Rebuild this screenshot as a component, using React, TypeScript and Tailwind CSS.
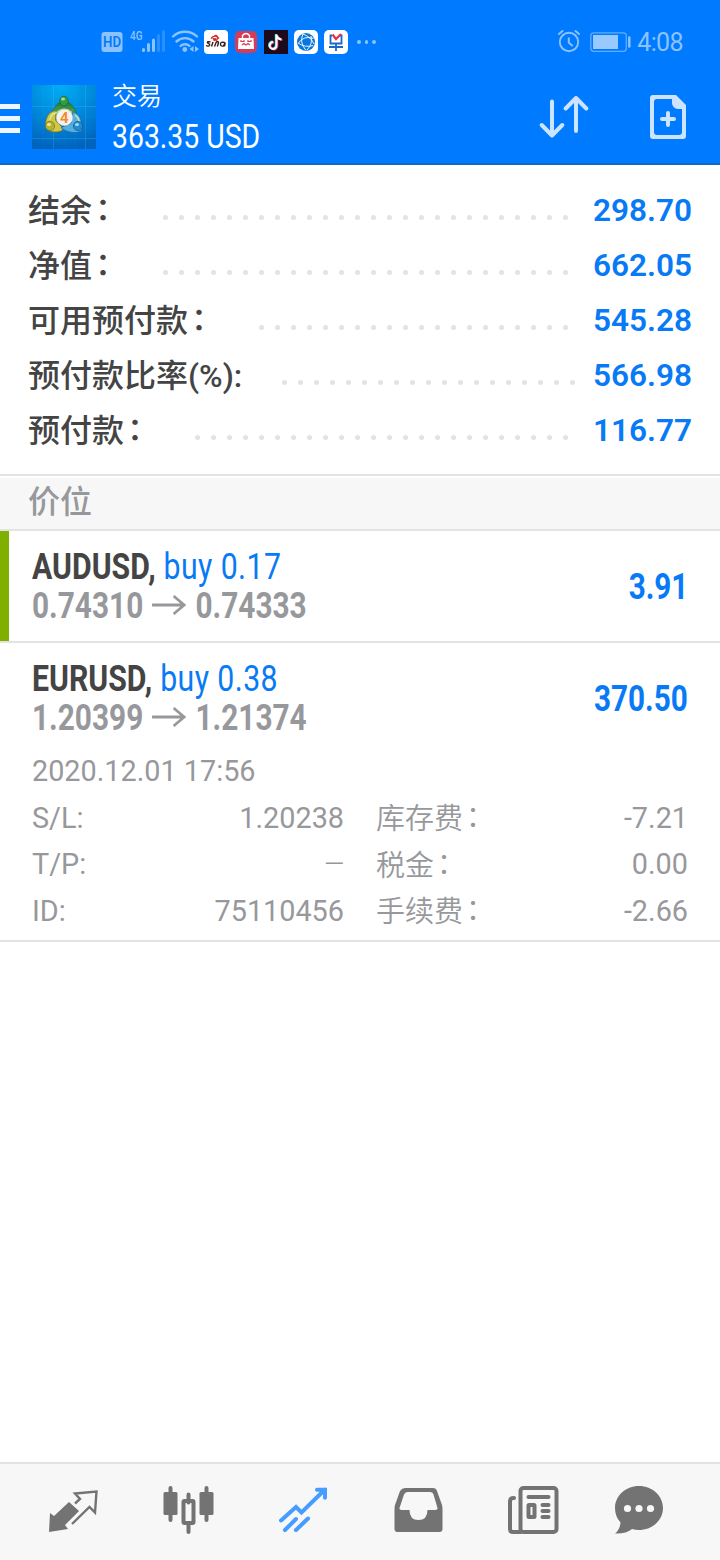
import React from 'react';

interface BalanceItem {
  label: string;
  value: string;
  dots: number;
  dotsEnd: string;
}

interface DetailItem {
  label: string;
  value: string;
}

const balance: BalanceItem[] = [
  { label: '结余：', value: '298.70', dots: 26, dotsEnd: 'mr-[25px]' },
  { label: '净值：', value: '662.05', dots: 26, dotsEnd: 'mr-[25px]' },
  { label: '可用预付款：', value: '545.28', dots: 20, dotsEnd: 'mr-[25px]' },
  { label: '预付款比率(%):', value: '566.98', dots: 19, dotsEnd: 'mr-[18px]' },
  { label: '预付款：', value: '116.77', dots: 24, dotsEnd: 'mr-[25px]' },
];

const leftDetails: DetailItem[] = [
  { label: 'S/L:', value: '1.20238' },
  { label: 'T/P:', value: '—' },
  { label: 'ID:', value: '75110456' },
];

const rightDetails: DetailItem[] = [
  { label: '库存费：', value: '-7.21' },
  { label: '税金：', value: '0.00' },
  { label: '手续费：', value: '-2.66' },
];

// The full-width colon sits nearer the middle of its cell than the font puts it
const Label: React.FC<{ text: string }> = ({ text }) =>
  text.endsWith('：') ? (
    <span>
      {text.slice(0, -1)}
      <span className="inline-block -translate-y-[0.06em] translate-x-[0.09em]">：</span>
    </span>
  ) : (
    <span>{text}</span>
  );

const StatusBar: React.FC = () => (
  <div className="flex h-[84px] items-start text-[#8cc3ff]">
    <svg className="ml-[100px] mt-[28px] h-7 w-[100px]" viewBox="100 28 100 28" fill="none">
      <rect x="101.5" y="32" width="21" height="20" rx="3" fill="currentColor" />
      <text x="103" y="47" fontSize="14" fontWeight="600" fill="#007aff" textLength="18" lengthAdjust="spacingAndGlyphs" className="font-[Roboto]">HD</text>
      <text x="130" y="40" fontSize="13" fontWeight="500" fill="currentColor" textLength="12.5" lengthAdjust="spacingAndGlyphs" className="font-[Roboto]">4G</text>
      <g strokeWidth="3" strokeLinecap="round" stroke="currentColor">
        <path d="M143.5 49.5v1M148.5 44.5v6M153.5 40v10.5" />
        <path d="M158.5 35.500v15M163.500 31.500v19" opacity=".3" />
      </g>
      <g stroke="currentColor" strokeWidth="2.400" strokeLinecap="round">
        <path d="M173 36.500a17.500 17.500 0 0 1 24 0M176.500 41.500a12.500 12.500 0 0 1 17 0M180.500 46a6.500 6.500 0 0 1 9 0" />
      </g>
      <circle cx="184.800" cy="49.500" r="2.400" fill="currentColor" />
      <path d="M193.500 46v6l-4-3zM195 46v6l4-3z" fill="currentColor" />
    </svg>
    <div className="ml-1 mt-[30px] flex gap-1.5">
      <svg className="size-6" viewBox="0 0 24 24">
        <rect width="24" height="24" rx="4" fill="#fff" />
        <path d="M7 8.500q4-5 8 0M10 6.500q3-3 4 2M9 8l1.500 3M13.500 8l-1 3" stroke="#d92b2b" strokeWidth="1.300" fill="none" />
        <path d="M6.500 12q-3.500-.8-3 .8 3.500 1.700 1.500 3-1.500.8-3-.3M9 12l-1.500 4.500M10.500 16.500l1.800-4.500q3-1 2 1.500l-1 3M20.500 12.500q-3.800-1-4 1.500t3 2l1.700-3.500-.7 4" stroke="#33201d" strokeWidth="1.400" fill="none" />
        <circle cx="11" cy="9.500" r="1.400" fill="#d92b2b" />
      </svg>
      <svg className="size-6" viewBox="0 0 24 24">
        <rect x="1" y="1" width="22" height="22" rx="5" fill="#d83b58" />
        <path d="M8.500 8V5.500q3.500-4 7 0V8" stroke="#fff" strokeWidth="1.300" fill="none" />
        <path d="M4.500 8h15l.5 11h-16z" fill="#fff" />
        <path d="M7 10v1.500h3V10M14 10v1.500h3V10M8 15l2-1.500 2 1.500 2-1.500 2 1.500" stroke="#d83b58" strokeWidth="1.200" fill="none" />
      </svg>
      <svg className="size-6" viewBox="0 0 24 24">
        <rect width="24" height="24" fill="#1c0b1c" />
        <g fill="none" strokeWidth="2">
          <path d="M12.500 4.500v11a3.400 3.400 0 1 1-3.200-3.400M12.500 5q1 4 5 4.500" stroke="#37dbe0" transform="translate(-.7 -.5)" />
          <path d="M12.500 4.500v11a3.400 3.400 0 1 1-3.200-3.400M12.500 5q1 4 5 4.500" stroke="#ee3158" transform="translate(.8 .6)" />
          <path d="M12.500 4.500v11a3.400 3.400 0 1 1-3.200-3.400M12.500 5q1 4 5 4.500" stroke="#fff" />
        </g>
      </svg>
      <svg className="size-6" viewBox="0 0 24 24">
        <rect width="24" height="24" rx="5" fill="#fff" />
        <circle cx="12" cy="12" r="9" fill="#0878df" />
        <path d="M9 4Q17 7 20 14M4.500 13Q10 5 19.500 8.500M9 4Q5 12 12 20.500M4 13q7 5 15 2.500M17 6q2 8-4 14" stroke="#fff" strokeWidth=".9" fill="none" />
      </svg>
      <svg className="size-6" viewBox="0 0 24 24">
        <rect width="24" height="24" rx="5" fill="#fff" />
        <path d="M8 5.500H6.500v8h11v-8H16M5 17h14M12 13v8" stroke="#1a68c4" strokeWidth="1.800" fill="none" />
        <path d="M8.500 4.500L12 9l5-5" stroke="#e5304c" strokeWidth="2.200" fill="none" />
      </svg>
    </div>
    <div className="ml-[9px] mt-[39px] flex gap-1 pt-px">
      <span className="size-[3.500px] rounded-full bg-current" />
      <span className="size-[3.500px] rounded-full bg-current" />
      <span className="size-[3.500px] rounded-full bg-current" />
    </div>
    <svg className="ml-auto mt-[28px] h-7 w-[76px]" viewBox="556 28 76 28" fill="none" stroke="currentColor">
      <circle cx="569" cy="42" r="9.200" strokeWidth="1.900" />
      <path d="M568.800 37.500v5l3.800 3.500" strokeWidth="2" />
      <path d="M559 34l3.500-3M579 34l-3.500-3" strokeWidth="2" strokeLinecap="round" />
      <rect x="590.800" y="32.800" width="35.500" height="18.500" rx="3" strokeWidth="1.300" opacity=".7" />
      <rect x="593" y="35" width="25" height="14" fill="#99caff" stroke="none" />
      <path d="M629.300 37.500v9" strokeWidth="2.500" strokeLinecap="round" />
    </svg>
    <span className="ml-[5px] mr-[37px] mt-[25px] font-[Roboto] text-[25px] leading-9 tracking-[-0.6px]">4:08</span>
  </div>
);

const AppLogo: React.FC = () => (
  <svg className="ml-3 size-16" viewBox="0 0 64 64">
    <defs>
      <radialGradient id="logo-bg" cx=".45" cy="0" r="1">
        <stop offset="0" stopColor="#00aef5" />
        <stop offset=".5" stopColor="#008bdd" />
        <stop offset="1" stopColor="#0064be" />
      </radialGradient>
      <linearGradient id="logo-green" x2="0" y2="1">
        <stop offset="0" stopColor="#237d34" />
        <stop offset="1" stopColor="#76bd6a" />
      </linearGradient>
    </defs>
    <rect width="64" height="64" fill="url(#logo-bg)" />
    <path d="M0 21.500h64M0 53.500h64M21.500 0v64M53.500 0v64" stroke="#5bc1f3" strokeWidth=".7" opacity=".35" />
    <path d="M0 11h64M0 32h64M0 43h64M11 0v64M32 0v64M43 0v64" stroke="#5bc1f3" strokeWidth=".5" opacity=".12" />
    <path d="M27 18c-6 4-7 11-6 17l9-6h6l8 5c1-7-1-12-7-16z" fill="url(#logo-green)" stroke="#1d6d42" strokeWidth=".8" />
    <path d="M24 25.500c-8 1-10.500 8-10.500 15.500l4 5c6 2 12 1 14-2l-8-9z" fill="#d1c646" stroke="#76762b" strokeWidth=".8" />
    <path d="M41 26.500c7 3 9 8 8 13l1 6c-6 4-16 2-21-3l10-4z" fill="#55aee2" stroke="#17679f" strokeWidth=".8" />
    <path d="M24 28q8-7 16-.500" stroke="#a8d795" strokeWidth="1.500" fill="none" />
    <path d="M17.500 35q2-7 7-7M43 30q5 4 4 9" stroke="#d6eba3" strokeWidth="1.300" fill="none" />
    <ellipse cx="32" cy="16" rx="4.200" ry="4.800" fill="#339b40" stroke="#17672f" strokeWidth=".7" />
    <ellipse cx="31" cy="14" rx="2" ry="1.500" fill="#a6da94" />
    <circle cx="18" cy="41" r="4.600" fill="#b8b22c" stroke="#6c722a" strokeWidth=".7" />
    <ellipse cx="17" cy="39.500" rx="2" ry="1.500" fill="#eee79d" />
    <circle cx="46" cy="41" r="4.600" fill="#248bd0" stroke="#11588f" strokeWidth=".7" />
    <ellipse cx="45" cy="39.500" rx="2" ry="1.500" fill="#a5daf5" />
    <circle cx="32.500" cy="32.500" r="8.200" fill="#f5f2ed" stroke="#c9cfbb" strokeWidth=".6" />
    <text x="32.300" y="38" textAnchor="middle" fontSize="15" fontWeight="600" fill="#f28a2d" className="font-[Roboto]">4</text>
  </svg>
);

const Header: React.FC = () => (
  <header className="h-[165px] border-b-2 border-[#1068cb] bg-[#007aff]">
    <StatusBar />
    <div className="flex h-[79px] items-start pt-px">
      <div className="mt-[19px] flex w-5 flex-col gap-[7px]">
        <span className="h-[5px] bg-[#eef7ff]" />
        <span className="h-[5px] bg-[#eef7ff]" />
        <span className="h-[5px] bg-[#eef7ff]" />
      </div>
      <AppLogo />
      <div className="-mt-[5px] ml-4 flex flex-col text-white">
        <span className="font-['Noto_Sans_CJK_SC',sans-serif] text-[25px] font-[350] leading-7">交易</span>
        <span className="mt-2 origin-left scale-x-[0.835] font-[Roboto] text-[34px] leading-10">363.35 USD</span>
      </div>
      <svg className="ml-auto mt-2.5 h-11 w-[50px]" viewBox="539 95 50 44" fill="none" stroke="#cce4ff" strokeWidth="4" strokeLinecap="round" strokeLinejoin="round">
        <path d="M552 101.500v34M541.700 125l10.300 10.500 10.300-10.500M576 131V98M565.700 108.500L576 98l10.300 10.500" />
      </svg>
      <svg className="ml-[61px] mr-[34px] mt-2.5 h-11 w-9" viewBox="650 95 36 44">
        <path fillRule="evenodd" d="M653 95h23l10 10v31a3 3 0 0 1-3 3h-30a3 3 0 0 1-3-3V98a3 3 0 0 1 3-3zm4 4a3 3 0 0 0-3 3v30a3 3 0 0 0 3 3h22a3 3 0 0 0 3-3v-23h-4a6 6 0 0 1-6-6v-4z" fill="#cce4ff" />
        <path d="M668 113v12M662 119h12" stroke="#cce4ff" strokeWidth="4" strokeLinecap="round" />
      </svg>
    </div>
  </header>
);

const BalanceRow: React.FC<{ item: BalanceItem }> = ({ item }) => (
  <div className="flex h-[55px] items-center">
    <div className="whitespace-nowrap pt-[2px] font-[Roboto,'Noto_Sans_CJK_SC',sans-serif] text-[32px] font-medium leading-[52px] text-[#444]">
      <Label text={item.label} />
    </div>
    <div className={`ml-auto mt-[15px] flex gap-[11px] ${item.dotsEnd}`}>
      {Array.from({ length: item.dots }, (_, i) => (
        <span key={i} className="size-[5px] rounded-full bg-[#e3e3e3]" />
      ))}
    </div>
    <div className="w-[100px] font-[Roboto] text-[32px] font-semibold text-[#087af5]">
      <span className="inline-block origin-left scale-x-[0.985]">{item.value}</span>
    </div>
  </div>
);

interface PositionProps {
  symbol: string;
  volume: string;
  open: string;
  current: string;
  profit: string;
}

const PositionHead: React.FC<PositionProps> = ({ symbol, volume, open, current, profit }) => (
  <div className="flex h-[110px] items-center justify-between pt-px font-[Roboto] text-[36px]">
    <div className="w-[280px] whitespace-nowrap leading-[39px]">
      <div className="w-max origin-left scale-x-[0.84]">
        <span className="font-bold text-[#444]">{symbol},</span>
        <span className="tracking-[0.5px] text-[#087af5]"> {volume}</span>
      </div>
      <div className="flex w-max origin-left scale-x-[0.828] items-center font-bold text-[#97989c]">
        {open}
        <svg className="mx-[11px] mb-0.5 h-5 w-[41px]" viewBox="0 0 41 20" preserveAspectRatio="none" fill="none" stroke="currentColor" strokeWidth="2.800">
          <path d="M0 10h39M26 1l13 9-13 9" />
        </svg>
        {current}
      </div>
    </div>
    <span className="origin-right scale-x-[0.825] font-bold text-[#087af5]">{profit}</span>
  </div>
);

const DetailColumn: React.FC<{ items: DetailItem[] }> = ({ items }) => (
  <div className="flex w-[312px] flex-col">
    {items.map((item) => (
      <div key={item.label} className="flex h-[46.500px] items-center justify-between">
        <div className={item.label.endsWith('：') ? 'pt-[3px] text-[29px] font-[350]' : ''}>
          <Label text={item.label} />
        </div>
        <span className={item.value === '—' ? 'origin-right scale-x-90 font-[350]' : ''}>{item.value}</span>
      </div>
    ))}
  </div>
);

const TabBar: React.FC = () => (
  <nav className="flex h-[98px] items-start gap-[63px] border-t-2 border-[#e2e2e2] bg-[#f7f7f7] pl-12 pt-5 text-[#737373]">
    <svg className="h-[52px] w-[52px]" viewBox="48 1484 52 52" fill="none">
      <path d="M69 1502l10 9-14 14 3 4-19 3 1-19 4 3z" fill="currentColor" />
      <path d="M75 1503.500l5-4.500-5-5.500 21.500-2-1.500 21-5.500-5.500L72 1524" stroke="currentColor" strokeWidth="2.400" />
    </svg>
    <svg className="h-[52px] w-[52px]" viewBox="163 1484 52 52" fill="none">
      <path d="M170.500 1488v32M206.500 1488v32M188.500 1494.500v8M188.500 1523v9" stroke="currentColor" strokeWidth="4" strokeLinecap="round" />
      <rect x="163.500" y="1492" width="14" height="23" rx="1.500" fill="currentColor" />
      <rect x="199.500" y="1492" width="14" height="23" rx="1.500" fill="currentColor" />
      <rect x="183.500" y="1501" width="10" height="22" rx="1" stroke="currentColor" strokeWidth="4" />
    </svg>
    <svg className="h-[52px] w-[52px] text-[#469cff]" viewBox="278 1484 52 52" fill="none" stroke="currentColor" strokeWidth="4" strokeLinecap="round">
      <path d="M281 1520.500l15-13.500 5.500 5.500L325 1489.500M317 1489.800h8v8M285 1530l11-11M296 1530l12-11.500" />
    </svg>
    <svg className="h-[52px] w-[52px]" viewBox="393 1484 52 52">
      <path fillRule="evenodd" fill="currentColor" d="M405 1488h28q3 0 4 3l5 14q.5 2 .5 4v20q0 3-3 3h-42q-3 0-3-3v-20q0-2 .5-4l5-14q2-3 5-3zm2.500 4q-2.500 0-3.500 2.500l-4.500 13.500q-.5 2 2 2h8q0 10 9 10t9-10h8q2.500 0 2-2l-4-13.500q-.5-2.500-3-2.500z" />
    </svg>
    <svg className="h-[52px] w-[52px]" viewBox="508 1484 52 52" fill="none" stroke="currentColor" strokeWidth="4" strokeLinecap="round">
      <rect x="520.500" y="1488" width="36" height="44" rx="3" />
      <path d="M514 1498q-4 0-4 3v28q0 3 3 3h8M528.500 1497h20M542.500 1505h6M542.500 1511h6M542.500 1517h6" />
      <rect x="528.500" y="1505" width="6" height="12" rx=".5" />
    </svg>
    <svg className="-ml-2.5 h-[52px] w-[52px]" viewBox="613 1484 52 52" fill="currentColor">
      <path d="M639 1486c13.500 0 24 10 24 22s-10.500 22-24 22q-4 0-7-1-6 5-17 4.500 5-4 5.500-11-5.500-6-5.500-14.500c0-12 10.500-22 24-22z" />
      <g fill="#f7f7f7">
        <circle cx="627.500" cy="1508.500" r="3.600" />
        <circle cx="639" cy="1508.500" r="3.600" />
        <circle cx="650.500" cy="1508.500" r="3.600" />
      </g>
    </svg>
  </nav>
);

export default function App() {
  return (
    <div className="flex h-[1560px] w-[720px] flex-col overflow-hidden bg-white font-[Roboto,'Noto_Sans_CJK_SC',sans-serif]">
      <Header />
      <section className="h-[311px] border-b-2 border-[#e3e3e3] pl-7 pr-[27px] pt-[17px]">
        {balance.map((item) => (
          <BalanceRow key={item.label} item={item} />
        ))}
      </section>
      <div className="mt-[2px] h-[53px] border-b-2 border-[#e3e3e3] bg-[#f7f7f7] pl-7 font-['Noto_Sans_CJK_SC',sans-serif] text-[32px] font-medium leading-[42px] text-[#97989c]">
        价位
      </div>
      <section className="h-28 border-b-2 border-[#e3e3e3]">
        <div className="h-[110px] border-l-[9px] border-[#7fb000] pl-[23px] pr-8">
          <PositionHead symbol="AUDUSD" volume="buy 0.17" open="0.74310" current="0.74333" profit="3.91" />
        </div>
      </section>
      <section className="h-[299px] border-b-2 border-[#e3e3e3] px-8">
        <PositionHead symbol="EURUSD" volume="buy 0.38" open="1.20399" current="1.21374" profit="370.50" />
        <div className="text-[28.800px] text-[#97989c]">
          <div className="h-[42px] leading-9">2020.12.01 17:56</div>
          <div className="flex gap-8">
            <DetailColumn items={leftDetails} />
            <DetailColumn items={rightDetails} />
          </div>
        </div>
      </section>
      <main className="flex-1" />
      <TabBar />
    </div>
  );
}
